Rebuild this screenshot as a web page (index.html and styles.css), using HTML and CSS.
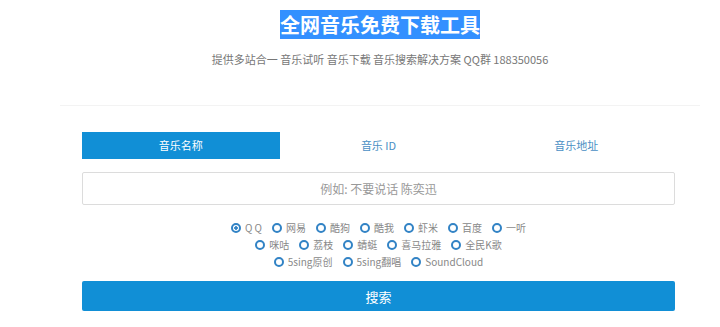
FILE: index.html
```html
<!DOCTYPE html>
<html lang="zh-CN">
<head>
  <meta charset="UTF-8" />
  <meta name="viewport" content="width=device-width, initial-scale=1.0"/>
  <title>全网音乐免费下载工具</title>
  <link rel="stylesheet" href="styles.css">
</head>
<body>

  <div class="page">
    <header class="head">
      <h1><span class="title-sel">全网音乐免费下载工具</span></h1>
      <p class="sub">提供多站合一 音乐试听 音乐下载 音乐搜索解决方案 QQ群 188350056</p>
    </header>

    <section class="search-box">
      <!-- Tabs -->
      <div class="tabs">
        <div class="tab active">音乐名称</div>
        <div class="tab">音乐 ID</div>
        <div class="tab">音乐地址</div>
      </div>

      <input class="query" type="text" placeholder="例如: 不要说话 陈奕迅">

      <!-- Sites -->
      <div class="sites">
        <div class="row">
          <label><input type="radio" name="site" checked> Q Q</label>
          <label><input type="radio" name="site"> 网易</label>
          <label><input type="radio" name="site"> 酷狗</label>
          <label><input type="radio" name="site"> 酷我</label>
          <label><input type="radio" name="site"> 虾米</label>
          <label><input type="radio" name="site"> 百度</label>
          <label><input type="radio" name="site"> 一听</label>
        </div>
        <div class="row">
          <label><input type="radio" name="site"> 咪咕</label>
          <label><input type="radio" name="site"> 荔枝</label>
          <label><input type="radio" name="site"> 蜻蜓</label>
          <label><input type="radio" name="site"> 喜马拉雅</label>
          <label><input type="radio" name="site"> 全民K歌</label>
        </div>
        <div class="row">
          <label><input type="radio" name="site"> 5sing原创</label>
          <label><input type="radio" name="site"> 5sing翻唱</label>
          <label><input type="radio" name="site"> SoundCloud</label>
        </div>
      </div>

      <button class="go">搜索</button>
    </section>
  </div>

</body>
</html>
```

FILE: styles.css
```css
body {
  font-family: "Noto Sans CJK SC", "Noto Sans", sans-serif;
  margin: 0;
  padding: 0;
  background: #fff;
  color: #666;
}

.page {
  width: 640px;
  margin-left: 60px;
}

.head {
  text-align: center;
  padding-top: 13px;
  padding-bottom: 39px;
  border-bottom: 1px solid #f3f3f3;
}

.head h1 {
  margin: 0;
  font-size: 20px;
  line-height: 24px;
  font-weight: bold;
}

.title-sel {
  background: #3390ff;
  color: #fff;
}

.sub {
  margin: 15px 0 0;
  font-size: 11px;
  line-height: 14px;
  color: #777;
}

.search-box {
  width: 593px;
  margin: 26px 0 0 22px;
}

/* Tabs */
.tabs {
  display: flex;
}

.tab {
  flex: 1;
  height: 27px;
  line-height: 27px;
  text-align: center;
  font-size: 11px;
  color: #4a8fc4;
}

.tab.active {
  background: #118fd6;
  color: #fff;
}

.query {
  display: block;
  box-sizing: border-box;
  width: 100%;
  height: 33px;
  margin-top: 13px;
  border: 1px solid #dcdcdc;
  border-radius: 2px;
  font-family: inherit;
  font-size: 12px;
  text-align: center;
  outline: none;
}

.query::placeholder {
  color: #999;
}

/* Radio list */
.sites {
  margin-top: 14px;
}

.row {
  display: flex;
  justify-content: center;
  gap: 10px;
  height: 17px;
  line-height: 17px;
  font-size: 10px;
  color: #888;
}

.row label {
  display: flex;
  align-items: center;
  gap: 2px;
}

.row input {
  appearance: none;
  -webkit-appearance: none;
  box-sizing: border-box;
  width: 10px;
  height: 10px;
  margin: 0 2px 0 0;
  border: 2px solid #3283c5;
  border-radius: 50%;
}

.row input:checked {
  background: radial-gradient(circle, #3283c5 0 1.5px, #fff 2px);
}

.go {
  display: block;
  width: 100%;
  height: 30px;
  margin-top: 11px;
  border: none;
  border-radius: 2px;
  background: #118fd6;
  color: #fff;
  font-family: inherit;
  font-size: 13px;
}
```
